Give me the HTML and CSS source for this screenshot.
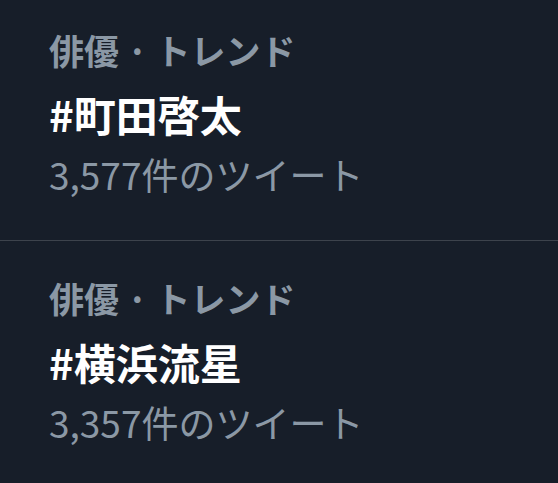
FILE: index.html
```html
<!DOCTYPE html>
<html lang="ja">
<head>
    <meta charset="UTF-8">
    <meta name="viewport" content="width=device-width, initial-scale=1.0">
    <title>トレンド</title>
    <link rel="stylesheet" href="styles.css">
</head>
<body>
    <div class="trends">
        <div class="trend">
            <div class="trend-meta">俳優 · トレンド</div>
            <div class="trend-name">#町田啓太</div>
            <div class="trend-count">3,577件のツイート</div>
        </div>
        <div class="trend">
            <div class="trend-meta">俳優 · トレンド</div>
            <div class="trend-name">#横浜流星</div>
            <div class="trend-count">3,357件のツイート</div>
        </div>
    </div>
</body>
</html>
```

FILE: styles.css
```css
body {
    margin: 0;
    padding: 0;
    background-color: #171e29;
    font-family: "Noto Sans CJK JP", "Noto Sans", sans-serif;
}

.trends {
    display: flex;
    flex-direction: column;
}

.trend {
    padding: 25px 0 38px 49px;
    border-bottom: 1px solid #3d434c;
}

.trend:first-child {
    padding-top: 18px;
}

.trend:last-child {
    border-bottom: none;
}

.trend-meta {
    color: #8b98a5;
    font-size: 35px;
    font-weight: bold;
    line-height: 64px;
}

.trend-name {
    color: #ffffff;
    font-size: 42px;
    font-weight: bold;
    line-height: 64px;
}

.trend-count {
    color: #8b98a5;
    font-size: 37px;
    line-height: 56px;
}
```
